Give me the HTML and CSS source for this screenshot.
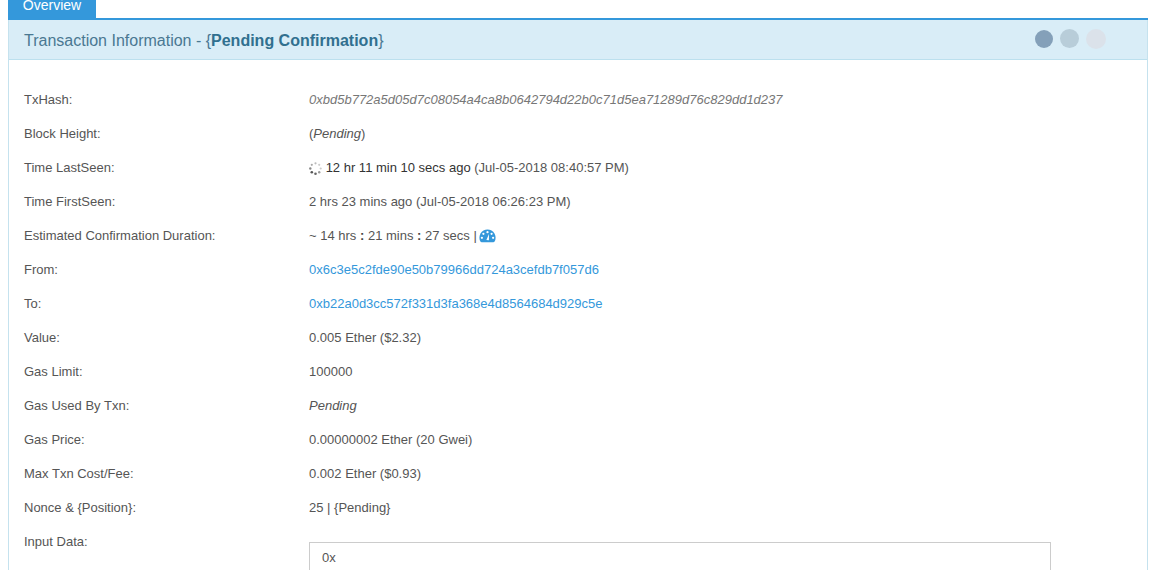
FILE: index.html
```html
<!DOCTYPE html>
<html lang="en">
<head>
    <meta charset="UTF-8">
    <title>Transaction Information</title>
    <link rel="stylesheet" href="styles.css">
</head>
<body>
    <div class="top-line">
        <a class="tab" href="#">Overview</a>
    </div>
    <div class="panel">
        <div class="panel-head">
            <h2>Transaction Information - {<b>Pending Confirmation</b>}</h2>
            <div class="dots">
                <span class="dot dot-1"></span>
                <span class="dot dot-2"></span>
                <span class="dot dot-3"></span>
            </div>
        </div>
        <div class="panel-body">
            <div class="row"><div class="label">TxHash:</div><div class="value hash">0xbd5b772a5d05d7c08054a4ca8b0642794d22b0c71d5ea71289d76c829dd1d237</div></div>
            <div class="row"><div class="label">Block Height:</div><div class="value">(<i>Pending</i>)</div></div>
            <div class="row"><div class="label">Time LastSeen:</div><div class="value">
                <svg class="spinner" width="13" height="13" viewBox="0 0 13 13">
                    <circle cx="6.5" cy="1.3" r="1.1" fill="#bbb"/>
                    <circle cx="10.2" cy="2.8" r="1.1" fill="#ccc"/>
                    <circle cx="11.7" cy="6.5" r="1.1" fill="#ccc"/>
                    <circle cx="10.2" cy="10.2" r="1.2" fill="#999"/>
                    <circle cx="6.5" cy="11.7" r="1.3" fill="#666"/>
                    <circle cx="2.8" cy="10.2" r="1.3" fill="#555"/>
                    <circle cx="1.3" cy="6.5" r="1.2" fill="#888"/>
                    <circle cx="2.8" cy="2.8" r="1.1" fill="#aaa"/>
                </svg>
                <span class="dark">12 hr 11 min 10 secs ago</span> (Jul-05-2018 08:40:57 PM)</div></div>
            <div class="row"><div class="label">Time FirstSeen:</div><div class="value">2 hrs 23 mins ago (Jul-05-2018 06:26:23 PM)</div></div>
            <div class="row"><div class="label">Estimated Confirmation Duration:</div><div class="value">~ 14 hrs <b>:</b> 21 mins <b>:</b> 27 secs |
                <svg class="gauge" width="17" height="14" viewBox="0 0 18 15">
                    <path d="M9 .5a8.8 8.8 0 0 0-7.6 13c.3.5.8.8 1.4.8h12.4c.6 0 1.1-.3 1.4-.8A8.8 8.8 0 0 0 9 .5z" fill="#3498db"/>
                    <circle cx="9" cy="3.4" r="1.2" fill="#fff"/>
                    <circle cx="4.6" cy="5.2" r="1.2" fill="#fff"/>
                    <circle cx="13.4" cy="5.2" r="1.2" fill="#fff"/>
                    <circle cx="3" cy="9.4" r="1.2" fill="#fff"/>
                    <circle cx="15" cy="9.4" r="1.2" fill="#fff"/>
                    <path d="M7.8 11.8 10.6 5.4 10.5 12z" fill="#fff"/>
                </svg></div></div>
            <div class="row"><div class="label">From:</div><div class="value"><a href="#">0x6c3e5c2fde90e50b79966dd724a3cefdb7f057d6</a></div></div>
            <div class="row"><div class="label">To:</div><div class="value"><a href="#">0xb22a0d3cc572f331d3fa368e4d8564684d929c5e</a></div></div>
            <div class="row"><div class="label">Value:</div><div class="value">0.005 Ether ($2.32)</div></div>
            <div class="row"><div class="label">Gas Limit:</div><div class="value">100000</div></div>
            <div class="row"><div class="label">Gas Used By Txn:</div><div class="value"><i>Pending</i></div></div>
            <div class="row"><div class="label">Gas Price:</div><div class="value">0.00000002 Ether (20 Gwei)</div></div>
            <div class="row"><div class="label">Max Txn Cost/Fee:</div><div class="value">0.002 Ether ($0.93)</div></div>
            <div class="row"><div class="label">Nonce &amp; {Position}:</div><div class="value">25 | {Pending}</div></div>
            <div class="row input-row"><div class="label">Input Data:</div><div class="value"><div class="input-box">0x</div></div></div>
        </div>
    </div>
</body>
</html>
```

FILE: styles.css
```css
html, body {
    height: 570px;
    overflow: hidden;
}
body {
    display: flex;
    flex-direction: column;
    box-sizing: border-box;
    font-family: "Liberation Sans", Arial, sans-serif;
    font-size: 13px;
    color: #555;
    margin: 0;
    padding: 0 18px 0 8px;
}
a {
    color: #3498db;
    text-decoration: none;
}
.top-line {
    flex: none;
    height: 18px;
    border-bottom: 2px solid #3498db;
}
.tab {
    display: block;
    width: 88px;
    height: 18px;
    line-height: 11px;
    background-color: #3498db;
    color: #fff;
    font-size: 14px;
    text-align: center;
}
.panel {
    flex: 1;
    min-height: 0;
    overflow: hidden;
    border: 1px solid #c5e2ee;
    border-width: 0 1px;
}
.panel-head {
    display: flex;
    justify-content: space-between;
    height: 39px;
    background-color: #d9edf7;
    border-bottom: 1px solid #bce0ee;
    padding: 0 41px 0 15px;
}
.panel-head h2 {
    margin: 0;
    font-size: 16px;
    font-weight: normal;
    line-height: 41px;
    color: #4a7892;
}
.panel-head b {
    color: #31708f;
}
.dots {
    display: flex;
    align-items: center;
    gap: 7px;
    height: 37px;
}
.dot {
    border-radius: 50%;
}
.dot-1 {
    width: 18px;
    height: 18px;
    background-color: #84a0b9;
}
.dot-2 {
    width: 19px;
    height: 19px;
    background-color: #b8cdd9;
}
.dot-3 {
    width: 20px;
    height: 20px;
    background-color: #dbe2ea;
}
.panel-body {
    padding: 23px 15px 0;
}
.row {
    display: flex;
    height: 34px;
    line-height: 34px;
}
.label {
    width: 285px;
    flex: none;
}
.value {
    flex: 1;
}
.value b {
    color: #444;
}
.hash {
    font-style: italic;
    color: #777;
}
.dark {
    color: #333;
}
.spinner {
    vertical-align: -3px;
}
.gauge {
    vertical-align: -3px;
    margin-left: -1px;
}
.input-box {
    width: 742px;
    height: 60px;
    margin-top: 17px;
    padding: 0 12px;
    border: 1px solid #ccc;
    line-height: 30px;
    box-sizing: border-box;
}
```
